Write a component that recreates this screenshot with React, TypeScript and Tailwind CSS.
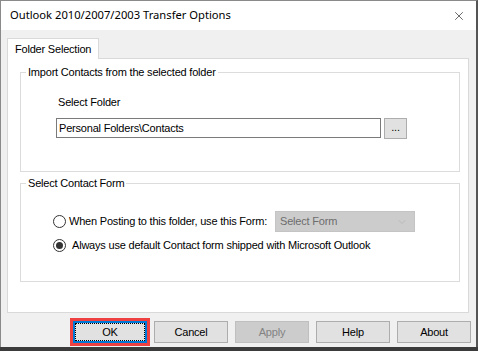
import { X, ChevronDown } from "lucide-react";

function Radio({ checked }: { checked?: boolean }) {
  return (
    <span className="w-[13px] h-[13px] rounded-full border border-[#333] bg-white flex items-center justify-center shrink-0">
      {checked && <span className="w-[7px] h-[7px] rounded-full bg-[#333]" />}
    </span>
  );
}

function Btn({ label, disabled }: { label: string; disabled?: boolean }) {
  return (
    <button
      className={
        disabled
          ? "w-[74px] h-[22px] border border-[#bfbfbf] bg-[#cccccc] text-[#838383]"
          : "w-[74px] h-[22px] border border-[#adadad] bg-[#e1e1e1] text-black"
      }
    >
      {label}
    </button>
  );
}

export default function App() {
  return (
    <div className="w-[478px] h-[351px] flex flex-col bg-[#3b3b3b] font-['Liberation_Sans',Arial,sans-serif] text-[11px] tracking-[-0.2px] text-black">
      <div className="h-[347px] flex flex-col border-l border-t border-[#8a8a8a] border-r-2 border-r-[#555] bg-[#f0f0f0]">
        {/* title bar */}
        <div className="h-[29px] bg-white flex items-center justify-between pl-[9px] pr-[8px]">
          <span className="font-['Noto_Sans',sans-serif] text-[11.2px] tracking-normal">Outlook 2010/2007/2003 Transfer Options</span>
          <X size={14} strokeWidth={1} className="text-black mr-[2px]" />
        </div>

        <div className="pl-[6px] pr-[7px] pt-[8px]">
          {/* tab */}
          <div className="relative z-10 -mb-px w-[92px] h-[21px] border border-b-0 border-[#d9d9d9] bg-white flex items-center pl-[7px]">
            Folder Selection
          </div>

          {/* tab page */}
          <div className="h-[255px] border border-[#d9d9d9] bg-white pl-[12px] pr-[8px] pt-[5px]">
            <fieldset className="h-[108px] border border-[#dcdcdc]">
              <legend className="ml-[5px] px-[2px] leading-[16px]">Import Contacts from the selected folder</legend>
              <div className="pl-[37px] pt-[14px]">Select Folder</div>
              <div className="flex items-center pl-[35px] mt-[7px]">
                <div className="w-[325px] h-[20px] border border-[#7a7a7a] bg-white flex items-center pl-[2px]">
                  Personal Folders\Contacts
                </div>
                <button className="ml-[3px] w-[23px] h-[21px] border border-[#adadad] bg-[#e1e1e1] leading-none pb-[2px]">
                  ...
                </button>
              </div>
            </fieldset>

            <fieldset className="mt-[3px] h-[107px] border border-[#dcdcdc]">
              <legend className="ml-[5px] px-[2px] leading-[16px]">Select Contact Form</legend>
              <div className="flex items-center pl-[32px] mt-[20px]">
                <Radio />
                <span className="ml-[3px]">When Posting to this folder, use this Form:</span>
                <div className="ml-[8px] w-[140px] h-[21px] bg-[#cccccc] border border-[#c4c4c4] flex items-center justify-between pl-[4px] pr-[6px] text-[#6d6d6d]">
                  Select Form
                  <ChevronDown size={12} strokeWidth={1} className="text-[#a8a8a8]" />
                </div>
              </div>
              <div className="flex items-center pl-[32px] mt-[5px]">
                <Radio checked />
                <span className="ml-[6px]">Always use default Contact form shipped with Microsoft Outlook</span>
              </div>
            </fieldset>
          </div>

          {/* buttons */}
          <div className="flex justify-end gap-[7px] mt-[8px] -mr-[2px]">
            <button className="w-[74px] h-[22px] border-2 border-[#0078d7] bg-[#e1e1e1] outline-3 outline-offset-[0px] outline-[#ee4040]">
              <span className="flex items-center justify-center w-full h-full border border-dotted border-black">OK</span>
            </button>
            <Btn label="Cancel" />
            <Btn label="Apply" disabled />
            <Btn label="Help" />
            <Btn label="About" />
          </div>
        </div>
      </div>
    </div>
  );
}
